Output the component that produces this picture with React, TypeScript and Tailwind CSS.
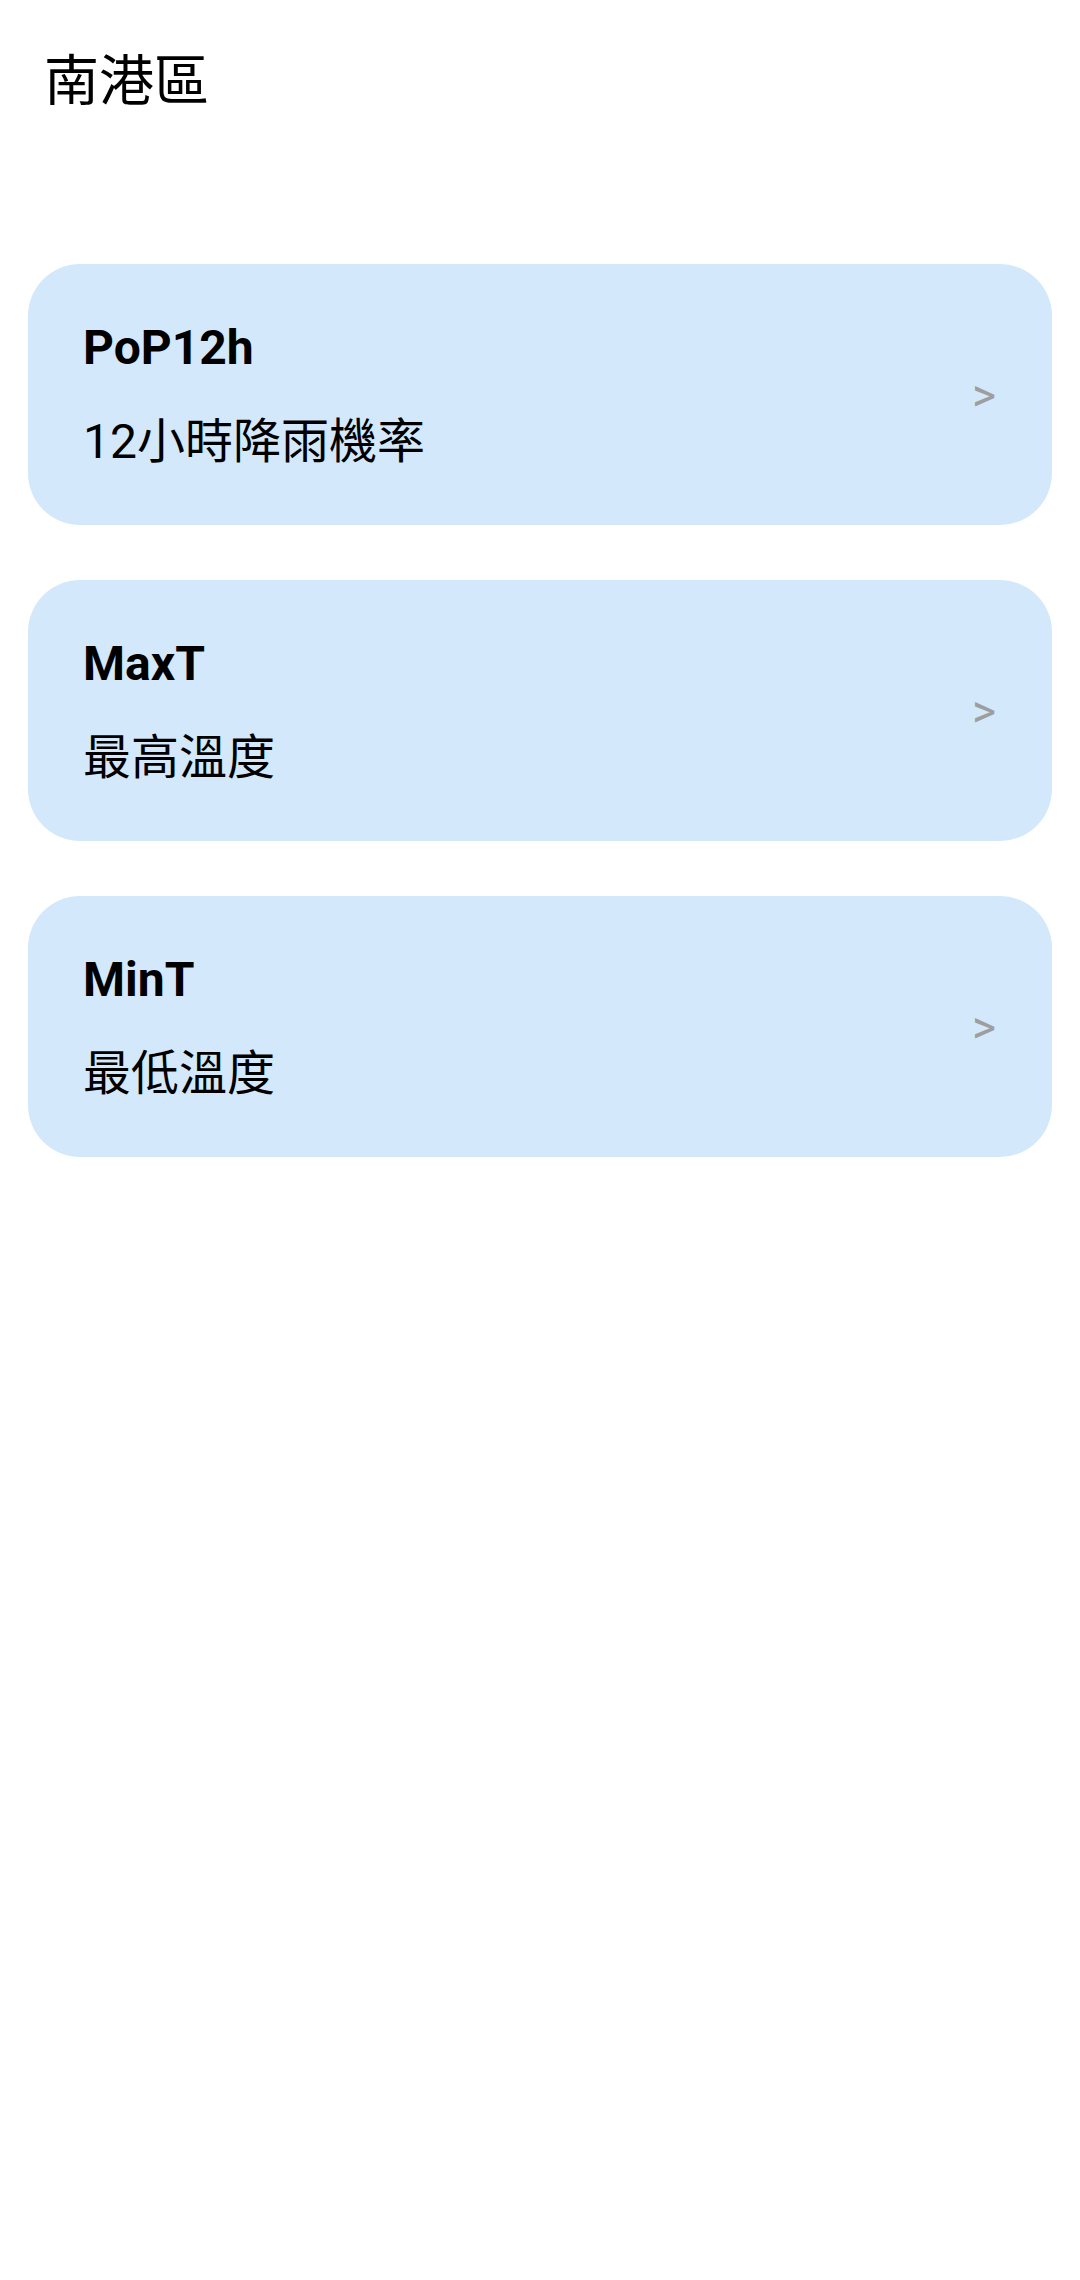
import React from "react";

const items = [
  { code: "PoP12h", name: "12小時降雨機率" },
  { code: "MaxT", name: "最高溫度" },
  { code: "MinT", name: "最低溫度" },
];

export default function App() {
  return (
    <div
      className="w-[1080px] h-[2280px] bg-white flex flex-col"
      style={{ fontFamily: 'Roboto, "Noto Sans CJK TC", sans-serif' }}
    >
      <div className="pl-[44px] pt-[41px] h-[264px]">
        <h1 className="text-[55px] leading-[80px] text-black font-normal">南港區</h1>
      </div>
      <div className="flex flex-col gap-[55px] px-[28px]">
        {items.map((it) => (
          <div
            key={it.code}
            className="h-[261px] rounded-[52px] bg-[#d3e8fb] flex items-center justify-between pl-[55px] pr-[56px]"
          >
            <div className="flex flex-col gap-[38px]">
              <div className="text-[48px] leading-[56px] font-bold text-black">{it.code}</div>
              <div className="text-[48px] leading-[56px] text-black">{it.name}</div>
            </div>
            <div className="text-[46px] leading-[46px] text-[#9e9e9e]">&gt;</div>
          </div>
        ))}
      </div>
    </div>
  );
}
